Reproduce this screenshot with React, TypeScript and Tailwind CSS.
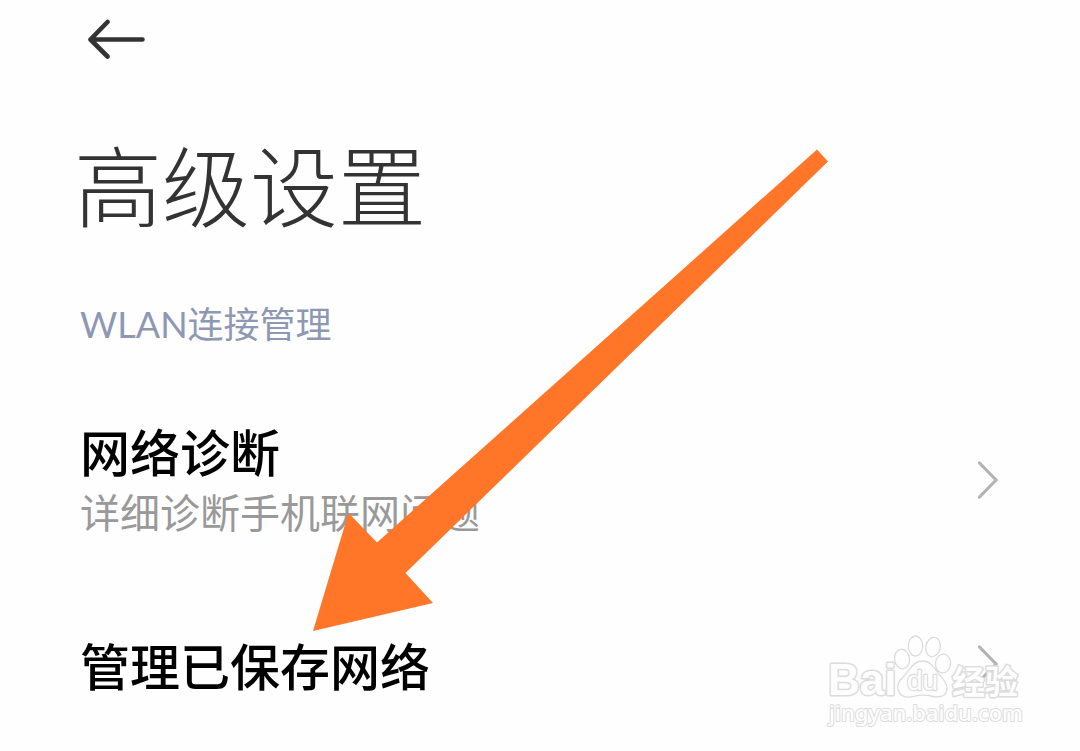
import { ReactNode } from 'react';

const items = [
  { title: '网络诊断', description: '详细诊断手机联网问题' },
  { title: '管理已保存网络', description: '' },
];

function BackIcon() {
  return (
    <svg width="60" height="44" viewBox="0 0 60 44" fill="none" stroke="#333333" strokeWidth="4.600" strokeLinecap="round" strokeLinejoin="round" aria-hidden="true">
      <path d="M54.500 21.500H2.500M19.500 4L2.500 21.500L19.500 38.500" />
    </svg>
  );
}

function ChevronIcon() {
  return (
    <svg className="shrink-0" width="24" height="40" viewBox="0 0 24 40" fill="none" stroke="#b3b3b3" strokeWidth="3.200" strokeLinecap="round" strokeLinejoin="miter" aria-hidden="true">
      <path d="M3.500 3L20 20L3.500 37" />
    </svg>
  );
}

function SettingRow({ title, children }: { title: string; children?: ReactNode }) {
  return (
    <li>
      <button type="button" className="flex w-full items-center justify-between text-left">
        <span className="flex flex-col">
          <span className="text-[50px] leading-[60px] font-medium text-black">{title}</span>
          {children}
        </span>
        <ChevronIcon />
      </button>
    </li>
  );
}

function PointerArrow() {
  return (
    <svg className="pointer-events-none absolute top-0 left-0" width="840" height="640" viewBox="0 0 840 640" aria-hidden="true">
      <path d="M817 149.500L828 161.500L405.500 573L433 603L313 631L348.500 513L377 542.500Z" fill="#ff7629" />
    </svg>
  );
}

function Watermark() {
  return (
    <svg className="pointer-events-none absolute top-[628px] right-[50px]" width="210" height="108" viewBox="0 0 210 108" fill="#fefefe" stroke="#dcdcdc" strokeWidth="1.300" strokeLinejoin="round" aria-hidden="true">
      <g fontWeight="700" strokeWidth="3" paintOrder="stroke">
        <text x="8" y="67" fontSize="44" fontFamily='"Liberation Sans", sans-serif'>Bai</text>
        <text x="132" y="66" fontSize="33" fontFamily='"Noto Sans CJK SC", sans-serif'>经验</text>
      </g>
      <ellipse cx="82" cy="31" rx="7.500" ry="9.800" transform="rotate(-8 82 31)" />
      <ellipse cx="95.500" cy="18" rx="7.200" ry="10" />
      <ellipse cx="113" cy="19" rx="7.200" ry="9.800" transform="rotate(12 113 19)" />
      <ellipse cx="123" cy="35.500" rx="7.500" ry="9.500" transform="rotate(8 123 35.500)" />
      <path d="M102.500 33C93 33 90 42 84 48C79 53 77 56 78 61C80 70 88 70 95 68C100 67 106 67 111 68C119 70 127 69 127 60C127 54 122 50 118 45C113 38 110 33 102.500 33Z" />
      <text x="87" y="62" fontSize="28" fontFamily='"Liberation Sans", sans-serif' strokeWidth="2.400" paintOrder="stroke">du</text>
      <text x="9" y="93" fontSize="22" fontFamily='"Noto Sans", sans-serif' fontWeight="500" strokeWidth="2" paintOrder="stroke">jingyan.baidu.com</text>
    </svg>
  );
}

export default function App() {
  return (
    <div className="relative min-h-screen overflow-hidden bg-[#fefefe] font-['Noto_Sans_CJK_SC',sans-serif]">
      <header className="px-[74px] pt-[18px]">
        <button type="button" aria-label="返回" className="ml-3.5 block">
          <BackIcon />
        </button>
        <h1 className="mt-[66px] text-[88px] leading-[108px] font-light text-[#333333]">高级设置</h1>
      </header>

      <main className="px-20">
        <h2 className="mt-[66px] font-['Lato','Noto_Sans_CJK_SC',sans-serif] text-[36px] leading-[44px] text-[#8f98b3]">WLAN连接管理</h2>
        <ul className="mt-[74px] flex flex-col gap-[94px]">
          {items.map((item) => (
            <SettingRow key={item.title} title={item.title}>
              {item.description && (
                <span className="mt-0.5 text-[40px] leading-[58px] text-[#999999]">{item.description}</span>
              )}
            </SettingRow>
          ))}
        </ul>
      </main>

      <PointerArrow />
      <Watermark />
    </div>
  );
}
